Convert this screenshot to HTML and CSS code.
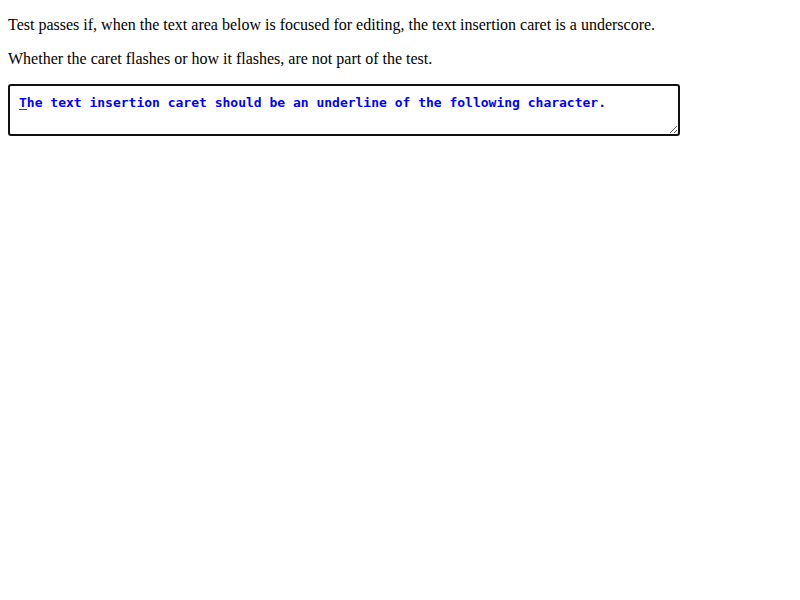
FILE: index.html
```html
<!DOCTYPE html>
<html>
<head>
<meta charset="utf-8">
<link rel="stylesheet" href="styles.css">
</head>
<body>
<p class="line">Test passes if, when the text area below is focused for editing, the text insertion caret is a underscore.</p>
<p class="line">Whether the caret flashes or how it flashes, are not part of the test.</p>
<div class="field">
<textarea class="area" spellcheck="false">The text insertion caret should be an underline of the following character.</textarea>
<span class="caret"></span>
</div>
</body>
</html>
```
FILE: styles.css
```css
html {
  margin: 0;
  padding: 0;
}
body {
  margin: 0 8px 8px;
  padding: 0;
  font-family: "Liberation Serif", serif;
  font-size: 16px;
  line-height: 18px;
  color: #000;
  background: #fff;
}
.line {
  margin: 16px 0;
}
.field {
  position: relative;
  width: 672px;
}
.area {
  display: block;
  box-sizing: border-box;
  width: 672px;
  height: 52px;
  margin: 0;
  padding: 9px 10px 7px 9px;
  border: 2px solid #111;
  border-radius: 3px;
  outline: none;
  font-family: "DejaVu Sans Mono", monospace;
  font-weight: bold;
  font-size: 13px;
  line-height: 15px;
  color: #0000ff;
  background: #fff;
  resize: both;
}
.caret {
  position: absolute;
  left: 11px;
  top: 25px;
  width: 8px;
  height: 1px;
  background: #e00000;
}
```
